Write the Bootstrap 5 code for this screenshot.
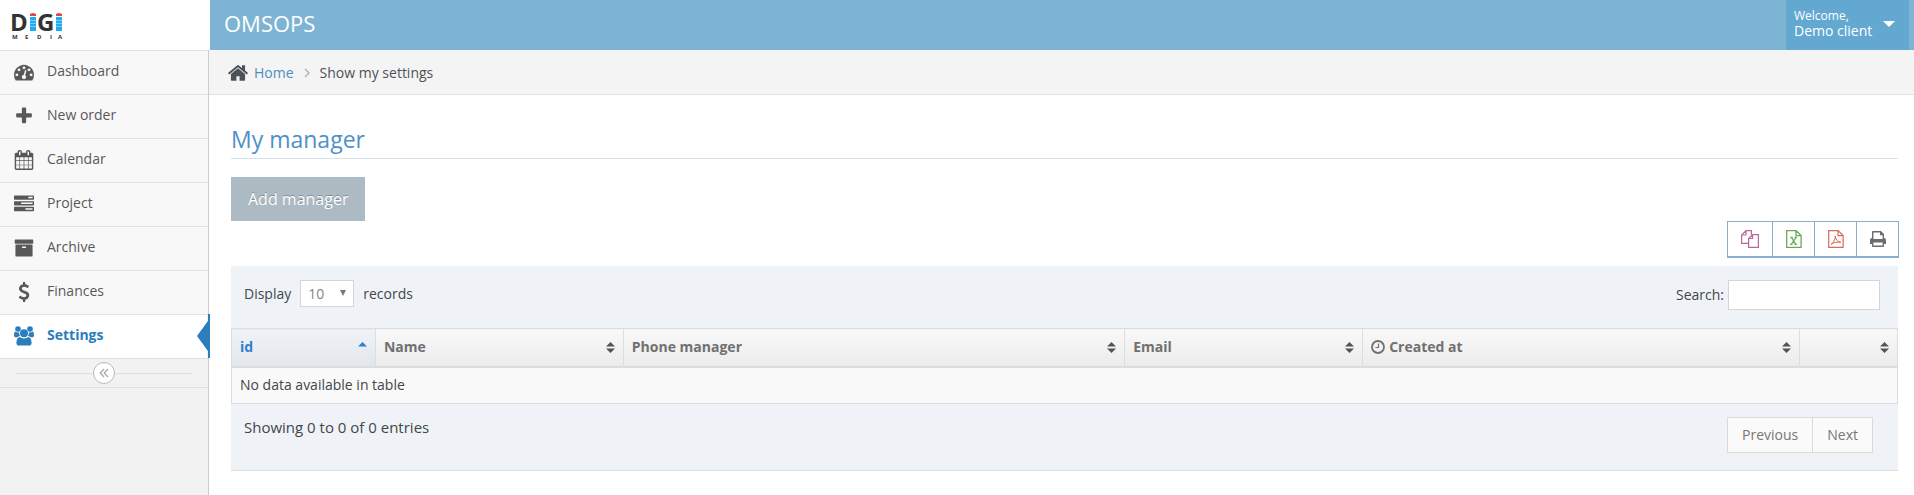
<!DOCTYPE html>
<html lang="en">
<head>
<meta charset="utf-8">
<meta name="viewport" content="width=device-width, initial-scale=1">
<title>OMSOPS - Show my settings</title>
<link href="https://cdn.jsdelivr.net/npm/bootstrap@5.3.0/dist/css/bootstrap.min.css" rel="stylesheet">
<style>
  body { font-family: "Open Sans", sans-serif; font-size: 14px; line-height: 20px; color: #434649; background: #fff; }
  a { text-decoration: none; }
  svg { display: block; flex: none; }
  svg:not([fill]) { fill: currentColor; }
  .brand-area { width: 210px; }
  .topbar { height: 50px; }
  .topbar-blue { background: #7db4d4; color: #fff; }
  .app-name { font-size: 22px; line-height: 30px; color: #fff; padding: 0 14px 4px; }
  .user-btn { background: #62a8d1; color: #fff; border: 0; width: 123px; margin-right: 5px; padding: 0 14px 2px 8px; text-align: left; }
  .user-btn small { font-size: 12px; line-height: 14px; }
  .user-btn span span { line-height: 16px; }

  .sidebar { width: 209px; background: #f2f2f2; border-right: 1px solid #ccc; }
  .side-link { height: 44px; padding: 0 12px 2px 14px; gap: 13px; border-top: 1px solid #e2e2e2; background: #f8f8f8; color: #585858; position: relative; }
  .side-link svg { width: 20px; height: 20px; }
  .side-link span { padding-bottom: 2px; }
  .side-link.current { background: #fff; color: #2b7dbc; font-weight: 700; }
  .side-link.current::after { content: ""; position: absolute; right: -2px; top: -1px; bottom: 0; width: 13px; background: #2b7dbc; clip-path: polygon(84% 0, 100% 0, 100% 100%, 84% 100%, 84% 84%, 0 50%, 84% 16%); }
  .side-toggle { height: 30px; border-top: 1px solid #e0e0e0; border-bottom: 1px solid #e0e0e0; padding: 0 16px; }
  .side-toggle::before, .side-toggle::after { content: ""; flex: 1; border-top: 1px solid #e0e0e0; }
  .side-toggle button { width: 22px; height: 22px; padding: 0; border: 1px solid #bbb; border-radius: 50%; background: #fff; color: #aaa; }

  .crumbs { height: 45px; background: #f4f4f4; border-bottom: 1px solid #e2e2e2; padding: 1px 18px 0; color: #4d5258; }
  .crumbs svg:first-child { margin-right: 5px; }
  .crumbs a { color: #4c8fbd; }
  .page-body { padding: 28px 16px 0 22px; }
  .page-title { font-size: 23px; line-height: 32px; padding-bottom: 3px; border-bottom: 1px solid #d5e3ef; margin-bottom: 18px; color: #5090c8; }
  .add-btn { background: #abbac3; color: #fff; border: 0; border-radius: 0; font-size: 16px; line-height: 20px; height: 44px; padding: 0 17px; text-shadow: 0 -1px 0 rgba(0,0,0,.25); }
  .export-group { margin: 0 -1px 8px 0; border: 1px solid #8aafce; border-bottom-width: 2px; }
  .export-group button { width: 42px; height: 34px; border: 0; background: #fff; padding: 0; }
  .export-group button:first-child { width: 44px; }
  .export-group button + button { border-left: 1px solid #8aafce; }

  .dt-box { background: #eff3f8; border-bottom: 1px solid #ddd; }
  .dt-top { height: 62px; padding: 14px 18px 0 13px; }
  .dt-top select { width: 54px; height: 27px; border: 1px solid #d5d5d5; background: #fff; color: #858585; padding: 0 7px; font-size: 14px; appearance: none; }
  .dt-length { position: relative; gap: 9px; }
  .dt-length svg { position: absolute; left: 96px; top: 10px; color: #777; pointer-events: none; }
  .dt-top input { width: 152px; height: 30px; border: 1px solid #d5d5d5; background: #fff; }
  .dt-grid { table-layout: fixed; width: 100%; border-collapse: collapse; border: 1px solid #ddd; }
  .dt-grid th { height: 38px; padding: 0 8px; border-left: 1px solid #ddd; border-bottom: 2px solid #ddd; background: linear-gradient(#f8f8f8, #ececec); color: #707070; }
  .dt-grid th.sorted { color: #307ecc; background: linear-gradient(#eff3f8, #e3e7ed); }
  .dt-grid td { height: 37px; padding: 0 8px; background: #f9f9f9; border-top: 1px solid #ddd; }
  .dt-grid th svg { color: #555; }
  .dt-grid th.sorted svg { color: #307ecc; }
  .c-id { width: 8.64%; } .c-name { width: 14.88%; } .c-phone { width: 30.1%; }
  .c-mail { width: 14.28%; } .c-date { width: 26.2%; }
  .dt-bottom { height: 66px; padding: 13px 25px 0 13px; }
  .dt-info { font-size: 15px; }
  .pager button { height: 36px; padding: 0 14px; background: #fafafa; border: 1px solid #d9d9d9; color: #777; }
  .pager button + button { margin-left: -1px; }
</style>
</head>
<body class="min-vh-100 d-flex flex-column">
<header class="topbar d-flex">
  <div class="brand-area">
    <a href="#" aria-label="Digi Media">
      <svg width="74" height="50" viewBox="0 0 74 50">
        <g font-family="Open Sans, sans-serif" font-weight="700" fill="#333">
          <text y="31" font-size="24"><tspan x="10">D</tspan><tspan x="37">G</tspan></text>
          <text x="12 25 37 50 58" y="39" font-size="6">MEDIA</text>
        </g>
        <g fill="#e04848"><path d="M30 16v-2q3-2 6 0v2zM56 16v-2q3-2 6 0v2z"/></g>
        <g fill="#22aaf0"><path d="M30 17h6v14h-6zM56 17h6v14h-6z"/></g>
        <path d="M30 20.500h6M30 23.500h6M30 26.500h6M56 20.500h6M56 23.500h6M56 26.500h6" stroke="#7cccf5" stroke-width="1"/>
      </svg>
    </a>
  </div>
  <div class="topbar-blue flex-grow-1 d-flex justify-content-between">
    <a href="#" class="app-name align-self-center">OMSOPS</a>
    <button type="button" class="user-btn d-flex align-items-center justify-content-between">
      <span class="d-flex flex-column"><small>Welcome,</small><span>Demo client</span></span>
      <svg width="12" height="6" viewBox="0 0 12 6"><path d="M0 0h12L6 6z"/></svg>
    </button>
  </div>
</header>

<div class="d-flex flex-grow-1">
  <nav class="sidebar flex-shrink-0">
    <a href="#" class="side-link d-flex align-items-center"><svg viewBox="0 0 1792 1792"><path d="M384 1152q0-53-37.500-90.500t-90.500-37.500-90.500 37.500-37.500 90.500 37.500 90.500 90.500 37.500 90.500-37.500 37.500-90.500zm192-448q0-53-37.500-90.500t-90.500-37.500-90.500 37.500-37.500 90.500 37.500 90.500 90.500 37.500 90.500-37.500 37.500-90.500zm428 481l101-382q6-26-7.500-48.500t-38.500-29.500-48 6.500-30 39.500l-101 382q-60 5-107 43.500t-63 98.500q-20 77 20 146t117 89 146-20 89-117q16-60-6-117t-72-91zm660-33q0-53-37.500-90.500t-90.500-37.500-90.500 37.500-37.500 90.500 37.500 90.500 90.500 37.500 90.500-37.500 37.500-90.500zm-640-640q0-53-37.500-90.500t-90.500-37.500-90.500 37.500-37.500 90.500 37.500 90.500 90.500 37.500 90.500-37.500 37.500-90.500zm448 192q0-53-37.500-90.500t-90.500-37.500-90.500 37.500-37.500 90.500 37.500 90.500 90.500 37.500 90.500-37.500 37.500-90.500zm320 448q0 261-141 483-19 29-54 29h-1402q-35 0-54-29-141-221-141-483 0-182 71-348t191-286 286-191 348-71 348 71 286 191 191 286 71 348z"/></svg><span>Dashboard</span></a>
    <a href="#" class="side-link d-flex align-items-center"><svg viewBox="0 0 1792 1792"><path d="M1600 736v192q0 40-28 68t-68 28h-416v416q0 40-28 68t-68 28h-192q-40 0-68-28t-28-68v-416h-416q-40 0-68-28t-28-68v-192q0-40 28-68t68-28h416v-416q0-40 28-68t68-28h192q40 0 68 28t28 68v416h416q40 0 68 28t28 68z"/></svg><span>New order</span></a>
    <a href="#" class="side-link d-flex align-items-center"><svg viewBox="0 0 1792 1792"><path d="M192 1664h288v-288h-288v288zm352 0h320v-288h-320v288zm-352-352h288v-320h-288v320zm352 0h320v-320h-320v320zm-352-384h288v-288h-288v288zm736 736h320v-288h-320v288zm-384-736h320v-288h-320v288zm768 736h288v-288h-288v288zm-384-352h320v-320h-320v320zm-352-864v-288q0-13-9.500-22.500t-22.500-9.500h-64q-13 0-22.500 9.500t-9.500 22.500v288q0 13 9.500 22.500t22.500 9.500h64q13 0 22.500-9.500t9.500-22.500zm736 864h288v-320h-288v320zm-384-384h320v-288h-320v288zm384 0h288v-288h-288v288zm32-480v-288q0-13-9.500-22.500t-22.500-9.500h-64q-13 0-22.500 9.500t-9.500 22.500v288q0 13 9.500 22.500t22.500 9.500h64q13 0 22.500-9.500t9.500-22.500zm384-64v1280q0 52-38 90t-90 38h-1408q-52 0-90-38t-38-90v-1280q0-52 38-90t90-38h128v-96q0-66 47-113t113-47h64q66 0 113 47t47 113v96h384v-96q0-66 47-113t113-47h64q66 0 113 47t47 113v96h128q52 0 90 38t38 90z"/></svg><span>Calendar</span></a>
    <a href="#" class="side-link d-flex align-items-center"><svg viewBox="0 0 1792 1792"><path fill-rule="evenodd" d="M64 128H1728q64 0 64 64V448q0 64-64 64H64q-64 0-64-64V192q0-64 64-64zM64 640H1728q64 0 64 64V960q0 64-64 64H64q-64 0-64-64V704q0-64 64-64zM64 1152H1728q64 0 64 64v256q0 64-64 64H64q-64 0-64-64v-256q0-64 64-64zM1280 256v128h384V256zM640 768v128h1024V768zM1024 1280v128h640v-128z"/></svg><span>Project</span></a>
    <a href="#" class="side-link d-flex align-items-center"><svg viewBox="0 0 1792 1792"><path d="M1088 832q0-26-19-45t-45-19h-256q-26 0-45 19t-19 45 19 45 45 19h256q26 0 45-19t19-45zm576-192v960q0 26-19 45t-45 19h-1408q-26 0-45-19t-19-45v-960q0-26 19-45t45-19h1408q26 0 45 19t19 45zm64-448v256q0 26-19 45t-45 19h-1536q-26 0-45-19t-19-45v-256q0-26 19-45t45-19h1536q26 0 45 19t19 45z"/></svg><span>Archive</span></a>
    <a href="#" class="side-link d-flex align-items-center"><svg viewBox="0 0 1792 1792"><path d="M1362 1185q0 153-99.500 263.500t-258.500 136.500v175q0 14-9 23t-23 9h-135q-13 0-22.500-9.500t-9.500-22.500v-175q-66-9-127.500-31t-101.500-44.500-74-48-46.500-37.500-17.500-18q-17-21-2-41l103-135q7-10 23-12 15-2 24 9l2 2q113 99 243 125 37 8 74 8 81 0 142.500-43t61.500-122q0-28-15-53t-33.500-42-58.500-37.500-66-32-80-32.500q-39-16-61.500-25t-61.500-26.500-62.500-31-56.500-35.500-53.500-42.500-43.500-49-35.500-58-21-66.500-8.500-78q0-138 98-242t255-134v-180q0-13 9.500-22.500t22.500-9.500h135q14 0 23 9t9 23v176q57 6 110.500 23t87 33.500 63.500 37.500 39 29 15 14q17 18 5 38l-81 146q-8 15-23 16-14 3-27-7-3-3-14.500-12t-39-26.500-58.500-32-74.500-26-85.500-11.500q-95 0-155 43t-60 111q0 26 8.500 48t29.500 41.500 39.500 33 56 31 60.500 27 70 27.500q53 20 81 31.500t76 35 75.500 42.500 62 50 53 63.500 31.500 76.500 13 94z"/></svg><span>Finances</span></a>
    <a href="#" class="side-link current d-flex align-items-center"><svg viewBox="0 0 20 20"><circle cx="10" cy="7.300" r="4"/><circle cx="4" cy="3" r="2.800"/><circle cx="16" cy="3" r="2.800"/><path d="M5.600 11c1.200.8 2.600 1.400 4.400 1.400s3.200-.6 4.400-1.400c2.400.6 3.200 3.200 3.200 6 0 1.700-1 2.600-2.600 2.600H5c-1.600 0-2.600-.9-2.600-2.600 0-2.800.8-5.400 3.200-6zM1.300 5.500c1.200 1 2.600 1.200 4 .7-.3 1.600 0 2.700.9 3.900-1 0-2 .4-2.700 1.200H2C.7 11.300 0 10.700 0 9.500c0-1.700.3-3.500 1.300-4zM18.700 5.500c-1.200 1-2.600 1.200-4 .7.300 1.600 0 2.700-.9 3.900 1 0 2 .4 2.700 1.200H18c1.300 0 2-.6 2-1.800 0-1.700-.3-3.500-1.300-4z"/></svg><span>Settings</span></a>
    <div class="side-toggle d-flex align-items-center">
      <button type="button" class="d-flex align-items-center justify-content-center" aria-label="Collapse menu"><svg width="10" height="10" viewBox="0 0 10 10"><path d="M5 1L1.200 5 5 9M9 1L5.200 5 9 9" fill="none" stroke="currentColor" stroke-width="1.300"/></svg></button>
    </div>
  </nav>

  <main class="flex-grow-1">
    <div class="crumbs d-flex align-items-center">
      <svg width="22" height="22" viewBox="0 0 1792 1792"><path d="M1472 992v480q0 26-19 45t-45 19h-384v-384h-256v384h-384q-26 0-45-19t-19-45v-480q0-1 .5-3t.5-3l575-474 575 474q1 2 1 6zm223-69l-62 74q-8 9-21 11h-3q-13 0-21-7l-692-577-692 577q-12 8-24 7-13-2-21-11l-62-74q-8-10-7-23.500t11-21.500l719-599q32-26 76-26t76 26l244 204v-195q0-14 9-23t23-9h192q14 0 23 9t9 23v408l219 182q10 8 11 21.500t-7 23.500z"/></svg>
      <a href="#">Home</a>
      <svg class="mx-2" width="10" height="10" viewBox="0 0 10 10"><path d="M3 1l4 4-4 4" fill="none" stroke="#b2b6bf" stroke-width="1.500"/></svg>
      <span>Show my settings</span>
    </div>
    <div class="page-body">
      <h1 class="page-title fw-normal">My manager</h1>
      <button type="button" class="add-btn d-block">Add manager</button>
      <div class="d-flex justify-content-end">
        <div class="export-group d-flex">
          <button type="button" class="d-flex align-items-center justify-content-center" aria-label="Copy"><svg width="18" height="18" viewBox="0 0 18 18" fill="none" stroke="#b9689f" stroke-width="1.200"><path d="M7 13.400H.6V5L5 .6h5.400v4M5 .6V5H.6M11.500 4.600h5.900v12.800H7.600V8.500zM11.500 4.600v3.900H7.600"/></svg></button>
          <button type="button" class="d-flex align-items-center justify-content-center" aria-label="Excel"><svg width="16" height="18" viewBox="0 0 16 18" fill="none" stroke="#69aa5a" stroke-width="1.300"><path d="M.7.700h9.500l4.900 4.900v11.700H.7zM10 .7v5h5M4.300 7.500h2.500M8.600 7.500H11M4 14.300h2.500M8.500 14.300h2.600M5.500 7.500l4.300 6.800M9.900 7.500l-4.500 6.800"/></svg></button>
          <button type="button" class="d-flex align-items-center justify-content-center" aria-label="PDF"><svg width="16" height="18" viewBox="0 0 16 18" fill="none" stroke="#d8695a" stroke-width="1.200"><path d="M.7.700h9.500l4.900 4.900v11.700H.7zM10 .7v5h5"/><path d="M3 14.500c2-1 4.400-5 4.300-8.500M7.300 6c0 3 2 6 5.700 6.300M3 14.500c2-2 6-2.800 10-2.200" stroke-width="1"/></svg></button>
          <button type="button" class="d-flex align-items-center justify-content-center" aria-label="Print"><svg width="16" height="16" viewBox="0 0 16 16" fill="#6c6c6c"><path fill-rule="evenodd" d="M2 7V1q0-1 1-1h8l3 3v4q2 0 2 2v4h-2v2q0 1-1 1H3q-1 0-1-1v-2H0V9q0-2 2-2zM3.400 1.400V8h9.200V4.200H10V1.400zM3.400 11.500v3.100h9.200v-3.100z"/></svg></button>
        </div>
      </div>

      <section class="dt-box">
        <div class="dt-top d-flex justify-content-between align-items-start">
          <div class="dt-length d-flex align-items-center">
            <label for="len">Display</label>
            <select id="len"><option>10</option><option>25</option><option>50</option></select>
            <svg width="6" height="6" viewBox="0 0 6 6"><path d="M0 0h6L3 6z"/></svg>
            <span>records</span>
          </div>
          <div class="d-flex align-items-center gap-1"><label for="q">Search:</label><input id="q" type="search"></div>
        </div>
        <table class="dt-grid">
          <colgroup><col class="c-id"><col class="c-name"><col class="c-phone"><col class="c-mail"><col class="c-date"><col></colgroup>
          <thead><tr>
            <th class="sorted"><div class="d-flex align-items-center justify-content-between">id<svg width="9" height="11" viewBox="0 0 9 11"><path d="M0 4.500L4.500 0 9 4.500z"/></svg></div></th>
            <th><div class="d-flex align-items-center justify-content-between">Name<svg width="9" height="11" viewBox="0 0 9 11"><path d="M0 4.500L4.500 0 9 4.500zM0 6.500h9L4.500 11z"/></svg></div></th>
            <th><div class="d-flex align-items-center justify-content-between">Phone manager<svg width="9" height="11" viewBox="0 0 9 11"><path d="M0 4.500L4.500 0 9 4.500zM0 6.500h9L4.500 11z"/></svg></div></th>
            <th><div class="d-flex align-items-center justify-content-between">Email<svg width="9" height="11" viewBox="0 0 9 11"><path d="M0 4.500L4.500 0 9 4.500zM0 6.500h9L4.500 11z"/></svg></div></th>
            <th><div class="d-flex align-items-center justify-content-between"><span class="d-flex align-items-center gap-1"><svg width="14" height="14" viewBox="0 0 14 14" fill="none" stroke="#707070"><circle cx="7" cy="7" r="6" stroke-width="1.800"/><path d="M7.500 3.500v4h-3" stroke-width="1.200"/></svg>Created at</span><svg width="9" height="11" viewBox="0 0 9 11"><path d="M0 4.500L4.500 0 9 4.500zM0 6.500h9L4.500 11z"/></svg></div></th>
            <th aria-label="Actions"><div class="d-flex justify-content-end"><svg width="9" height="11" viewBox="0 0 9 11"><path d="M0 4.500L4.500 0 9 4.500zM0 6.500h9L4.500 11z"/></svg></div></th>
          </tr></thead>
          <tbody><tr><td colspan="6">No data available in table</td></tr></tbody>
        </table>
        <div class="dt-bottom d-flex justify-content-between align-items-start">
          <div class="dt-info">Showing 0 to 0 of 0 entries</div>
          <div class="pager d-flex"><button type="button">Previous</button><button type="button">Next</button></div>
        </div>
      </section>
    </div>
  </main>
</div>
<script src="https://cdn.jsdelivr.net/npm/bootstrap@5.3.0/dist/js/bootstrap.bundle.min.js"></script>
</body>
</html>
